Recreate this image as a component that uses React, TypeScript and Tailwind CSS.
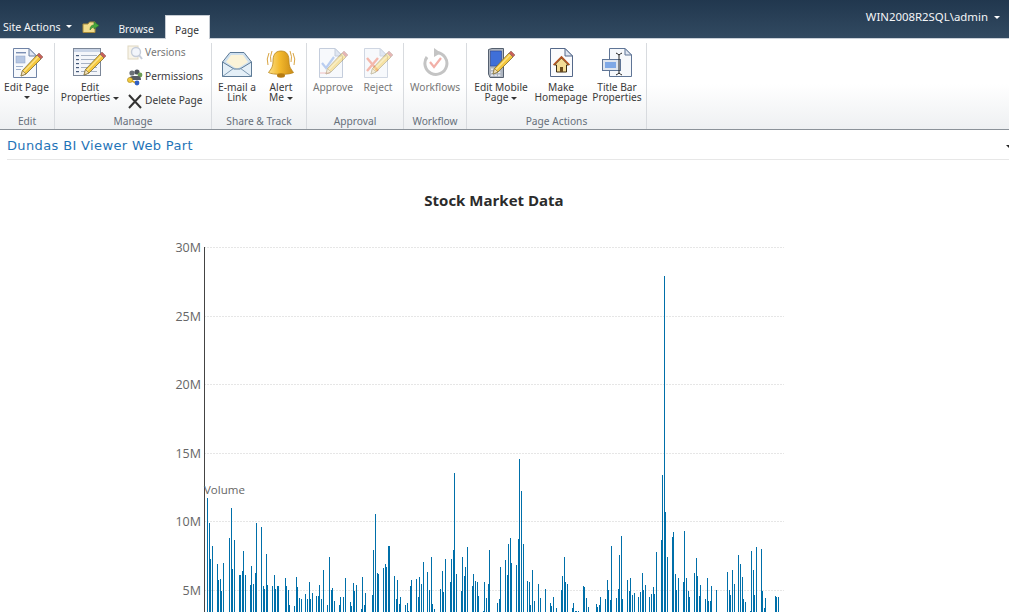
import React from "react";

const A: [number, number][] = [[141,175],[147,249],[150,357],[156,318],[171,372],[174,420],[180,417],[183,453],[189,369],[207,294],[213,204],[216,387],[222,300],[237,405],[240,405],[246,393],[249,333],[255,405],[270,435],[273,378],[279,432],[285,399],[288,249],[303,261],[309,438],[312,447],[318,342],[321,435],[336,438],[342,405],[345,447],[351,438],[354,438],[375,414],[378,438],[384,450],[387,495],[402,498],[408,411],[411,441],[417,474],[423,477],[435,462],[441,477],[447,426],[450,477],[456,459],[468,468],[474,468],[477,435],[483,477],[489,390],[501,495],[507,351],[513,450],[516,444],[522,483],[537,495],[540,471],[549,471],[555,414],[570,486],[573,498],[579,429],[582,453],[588,435],[603,507],[606,411],[612,495],[615,459],[636,465],[639,330],[645,222],[651,399],[654,402],[669,384],[675,372],[678,381],[684,318],[687,318],[702,408],[708,477],[711,420],[717,492],[720,471],[735,495],[741,489],[744,513],[750,438],[753,420],[768,417],[774,471],[777,411],[783,432],[789,366],[801,396],[807,450],[813,351],[816,492],[822,507],[840,447],[846,393],[849,456],[855,357],[870,426],[873,357],[879,330],[882,99],[888,402],[903,453],[906,351],[912,408],[915,381],[921,321]];
const B: [number, number][] = [[6,438],[9,402],[15,423],[21,426],[24,468],[39,513],[42,426],[48,474],[54,432],[57,330],[81,489],[87,477],[90,381],[105,360],[111,405],[114,312],[120,294],[123,369],[138,375],[144,297],[147,57],[153,153],[159,312],[171,423],[177,426],[180,495],[186,390],[192,483],[204,432],[210,474],[225,447],[240,489],[243,498],[249,471],[258,504],[273,450],[276,408],[282,351],[285,426],[291,432],[306,504],[309,489],[315,513],[318,513],[324,513],[339,438],[342,441],[348,474],[354,501],[378,492],[381,501],[387,495],[390,471],[405,477],[411,420],[414,450],[420,480],[423,318],[438,474],[444,447],[447,345],[453,288],[456,477],[471,420],[477,453],[480,414],[486,465],[492,459],[504,471],[510,456],[516,399],[519,450],[525,435],[537,471],[543,462],[549,441],[552,462],[558,336],[573,300],[576,105],[582,-492],[585,216],[591,351],[606,291],[609,276],[615,402],[618,450],[624,414],[639,426],[642,273],[648,414],[654,453],[657,471],[672,399],[678,354],[681,408],[687,468],[690,435],[705,477],[711,414],[714,483],[720,483],[723,438],[738,450],[771,396],[777,450],[780,465],[786,390],[792,432],[804,345],[810,372],[816,411],[819,477],[825,486],[840,513],[843,333],[849,390],[852,465],[858,321],[873,327],[876,453],[882,504],[885,474],[915,468],[918,471],[924,471]];

const bars = [
  ...A.map(([x, y]) => ({ x: 160 + x / 3, y: 440 + y / 3 })),
  ...B.map(([x, y]) => ({ x: 470 + x / 3, y: 440 + y / 3 })),
];

const ticks = [
  ["30M", 247],
  ["25M", 316],
  ["20M", 384],
  ["15M", 453],
  ["10M", 521],
  ["5M", 590],
] as const;

const Caret = ({ className = "border-t-[#444]" }: { className?: string }) => (
  <span className={`inline-block w-0 h-0 border-l-[3px] border-r-[3px] border-t-[3px] border-l-transparent border-r-transparent align-middle ${className}`} />
);

const Pencil = ({ o = 1, dx = 0, dy = 0 }: { o?: number; dx?: number; dy?: number }) => (
  <g opacity={o} transform={`translate(${dx} ${dy})`}>
    <path d="M10 28 L11.5 22.5 L26 7 L30 11 L15 26 Z" fill="#f5c73d" stroke="#7a6a35" strokeWidth="0.8" />
    <path d="M13 23.5 L27.5 8.5" stroke="#fbe48a" strokeWidth="1.4" />
    <path d="M10 28 L11.5 22.5 L15 26 Z" fill="#f3dfb5" stroke="#7a6a35" strokeWidth="0.6" />
    <path d="M26 7 L28 5 L32 9 L30 11 Z" fill="#c9605a" stroke="#8b6a60" strokeWidth="0.6" />
  </g>
);

const Doc = ({ children, stroke = "#6f83a6", o = 1 }: { children?: React.ReactNode; stroke?: string; o?: number }) => (
  <g opacity={o}>
    <path d="M3.5 1.5 H19 L26.5 9 V30.5 H3.5 Z" fill="#f7f9fc" stroke={stroke} />
    <path d="M19 1.5 V9 H26.5 Z" fill="#dfe6f2" stroke={stroke} />
    {children}
  </g>
);

const I = ({ children, w = 34, h = 32 }: { children: React.ReactNode; w?: number; h?: number }) => (
  <svg width={w} height={h} viewBox={`0 0 ${w} ${h}`} className="block mx-auto">
    {children}
  </svg>
);

const EditPageIcon = () => (
  <I>
    <Doc>
      <rect x="6" y="5" width="10" height="1.4" fill="#7b8fb3" />
      <rect x="6" y="9" width="9" height="7" fill="#b5c6e2" stroke="#8ea3c6" strokeWidth="0.5" />
      <rect x="6" y="19" width="7" height="1" fill="#9fb0cc" />
      <rect x="6" y="22" width="5" height="1" fill="#9fb0cc" />
    </Doc>
    <Pencil dx={1} dy={1} />
  </I>
);

const EditPropsIcon = () => (
  <I w={36} h={32}>
    <rect x="1.5" y="1.5" width="27" height="27" fill="#f4f6fa" stroke="#7c8798" />
    <rect x="2" y="2" width="26" height="3" fill="#c9d4e6" />
    {[9, 13, 17, 21, 25].map((y) => (
      <g key={y}>
        <rect x="4" y={y - 1} width="3" height="1.2" fill="#465a7a" />
        <rect x="9" y={y - 1} width="16" height="1" fill="#a7b2c4" />
      </g>
    ))}
    <Pencil dx={2} dy={0} />
  </I>
);

const EnvelopeIcon = () => (
  <I w={32} h={30}>
    <path d="M1.5 13 L9 3.5 H23 L30.5 13 V27.5 H1.5 Z" fill="#cfe0ee" stroke="#5d7a96" />
    <path d="M5 13 L10 6 H22 L27 13 L16 20 Z" fill="#fbf3d8" />
    <path d="M1.5 13 L13 20 H19 L30.5 13 V27.5 H1.5 Z" fill="#e4eff7" stroke="#5d7a96" />
    <path d="M1.5 27.5 L13 19 M30.5 27.5 L19 19" stroke="#7e9ab3" fill="none" />
  </I>
);

const BellIcon = () => (
  <I w={30} h={30}>
    <defs>
      <linearGradient id="bell" x1="0" x2="1" y1="0" y2="0">
        <stop offset="0" stopColor="#fbe08a" />
        <stop offset="0.45" stopColor="#f3b92c" />
        <stop offset="1" stopColor="#c98a17" />
      </linearGradient>
    </defs>
    <path d="M3 4 Q0 10 2 16 M27 4 Q30 10 28 16 M6 2 Q3.5 8 5 13 M24 2 Q26.5 8 25 13" stroke="#d9a441" strokeWidth="1" fill="none" />
    <path d="M15 2 C8.5 2 7 7 7 12 C7 18 5 20 2.5 23.5 C6 26 24 26 27.5 23.5 C25 20 23 18 23 12 C23 7 21.5 2 15 2 Z" fill="url(#bell)" stroke="#b9851a" strokeWidth="0.8" />
    <ellipse cx="15" cy="26.5" rx="4" ry="2.2" fill="#b67b12" />
  </I>
);

const ApproveIcon = () => (
  <I>
    <Doc stroke="#c4cddc">
      <path d="M6 16 L10 21 L18 10" stroke="#b9cdf0" strokeWidth="2.2" fill="none" />
      <path d="M4 26 H14" stroke="#f0c0c0" />
    </Doc>
    <Pencil dx={0} dy={-1} o={0.45} />
  </I>
);

const RejectIcon = () => (
  <I>
    <Doc stroke="#cfd6e2">
      <path d="M6 11 L17 24 M17 11 L6 24" stroke="#f4b8ac" strokeWidth="2.4" fill="none" />
    </Doc>
    <Pencil dx={0} dy={-1} o={0.45} />
  </I>
);

const WorkflowIcon = () => (
  <I w={28} h={32}>
    <path d="M6 10 A11 11 0 1 0 16 5.5" fill="none" stroke="#c4c4c4" strokeWidth="3" />
    <path d="M13 1 L20 6 L13 10 Z" fill="#c4c4c4" />
    <path d="M9 15 L13 20 L20 11" fill="none" stroke="#f2b0a8" strokeWidth="2.2" />
  </I>
);

const MobileIcon = () => (
  <I w={30}>
    <path d="M2.5 2.5 L6 1.5 H17.5 V30.5 H4 L2.5 27 Z" fill="#aeb5c0" stroke="#55606f" />
    <rect x="4.5" y="4" width="11" height="15" fill="#3f6fd8" stroke="#27418f" strokeWidth="0.6" />
    {[21.5, 24.5, 27.5].map((y) =>
      [5, 8.5, 12].map((x) => <rect key={`${x}${y}`} x={x} y={y} width="2.4" height="1.6" fill="#e6e9ee" />)
    )}
    <Pencil dx={-3} dy={-1} />
  </I>
);

const HomepageIcon = () => (
  <I w={30} h={32}>
    <path d="M4.5 1.5 H19 L26.5 9 V29.5 H4.5 Z" fill="#fafbfd" stroke="#55698a" />
    <path d="M19 1.5 V9 H26.5 Z" fill="#dfe6f2" stroke="#55698a" />
    <path d="M8.5 18 L15.5 11 L22.5 18 H20.5 V25 H10.5 V18 Z" fill="#f4dc96" stroke="#3c2c12" />
    <path d="M7.5 18 L15.5 10 L23.5 18" fill="none" stroke="#b3521f" strokeWidth="1.6" />
    <rect x="14" y="20" width="3" height="5" fill="#6a4a1e" />
  </I>
);

const TitleBarIcon = () => (
  <I w={32} h={32}>
    <path d="M8.5 1.5 H24 L30.5 8 V29.5 H8.5 Z" fill="#f6f8fb" stroke="#5f7596" />
    <path d="M24 1.5 V8 H30.5 Z" fill="#dfe6f2" stroke="#5f7596" />
    <rect x="1.5" y="12.5" width="18" height="11" fill="#dfe5ee" stroke="#5f7596" />
    <rect x="4" y="15" width="11" height="6" fill="#7fa8e6" />
    <path d="M15 6 Q17 7 18 8 Q19 7 21 6 M15 28 Q17 27 18 26 Q19 27 21 28 M18 8 V26" stroke="#222" fill="none" />
  </I>
);

const Big = ({ w, icon, lines, caret, muted }: { w: string; icon: React.ReactNode; lines: string[]; caret?: "line" | "inline"; muted?: boolean }) => (
  <div className={`${w} shrink-0 flex flex-col items-center text-center leading-[10px] ${muted ? "text-[#777]" : "text-[#3a3a3a]"}`}>
    <div className="h-[36px] flex items-end mb-[3px]">{icon}</div>
    {lines.map((l, i) => (
      <div key={l} className="h-[10px] whitespace-nowrap">
        {l}
        {caret === "inline" && i === lines.length - 1 && <Caret className="ml-[3px] border-t-[#333]" />}
      </div>
    ))}
    {caret === "line" && (
      <div className="h-[10px] flex items-center justify-center">
        <Caret className="border-t-[#333]" />
      </div>
    )}
  </div>
);

const Group = ({ w, label, children }: { w: string; label: string; children: React.ReactNode }) => (
  <div className={`${w} shrink-0 h-[86px] flex flex-col border-r border-[#d8dbdf]`}>
    <div className="flex flex-1 items-start">{children}</div>
    <div className="h-[14px] mb-[1px] text-center text-[#666f7a] leading-[14px]">{label}</div>
  </div>
);

const Small = ({ icon, label, muted }: { icon: React.ReactNode; label: string; muted?: boolean }) => (
  <div className={`h-[24px] flex items-center gap-[1px] whitespace-nowrap ${muted ? "text-[#777]" : "text-[#3a3a3a]"}`}>
    <svg width="18" height="18" viewBox="0 0 18 18" className="shrink-0">
      {icon}
    </svg>
    {label}
  </div>
);

export default function App() {
  return (
    <div className="w-[1009px] h-[612px] overflow-hidden bg-white text-[10.2px]" style={{ fontFamily: '"Noto Sans", "DejaVu Sans", sans-serif' }}>
      {/* Top bar */}
      <div className="h-[39px] bg-gradient-to-b from-[#21374e] to-[#324a61] border-b border-[#c9d0d8] flex items-end justify-between">
        <div className="flex items-end h-full">
          <div className="ml-[3px] mb-[4px] text-[#f4f6f8] text-[10.6px] leading-[14px] whitespace-nowrap">
            Site Actions
            <Caret className="ml-[5px] mb-[3px] border-t-white" />
          </div>
          <svg width="18" height="16" viewBox="0 0 18 16" className="ml-[10px] mb-[3px]">
            <path d="M1 5 H6 L7.5 3 H13 V13.5 H1 Z" fill="#f1dc8c" stroke="#a88c3c" />
            <path d="M8 11 Q8 6 12 6 V3 L17 6.5 L12 10 V8 Q10 8 8 11 Z" fill="#48a83f" stroke="#2f7a2a" strokeWidth="0.6" />
          </svg>
          <div className="w-[47px] ml-[13px] mb-[2px] text-center text-[#f3f5f7] leading-[14px]">Browse</div>
          <div className="w-[45px] ml-[5px] h-[24px] mb-[-1px] bg-white border border-b-0 border-[#c6ccd3] text-center text-[#333] leading-[28px]">Page</div>
        </div>
        <div className="mr-[9px] self-start mt-[10px] text-[#f4f6f8] text-[11.4px] leading-[14px] whitespace-nowrap">
          WIN2008R2SQL\admin
          <Caret className="ml-[6px] border-t-white" />
        </div>
      </div>

      {/* Ribbon */}
      <div className="h-[91px] bg-gradient-to-b from-white from-50% to-[#eef0f2] border-b border-[#8b9299] flex items-end">
        <Group w="w-[55px]" label="Edit">
          <Big w="w-[53px]" icon={<EditPageIcon />} lines={["Edit Page"]} caret="line" />
        </Group>
        <Group w="w-[157px]" label="Manage">
          <div className="w-[5px]" />
          <Big w="w-[60px]" icon={<EditPropsIcon />} lines={["Edit", "Properties"]} caret="inline" />
          <div className="ml-[6px] flex flex-col mt-[-2px]">
            <Small
              muted
              label="Versions"
              icon={
                <g opacity="0.55">
                  <rect x="2" y="2" width="10" height="13" fill="#f3ecd8" stroke="#c7b88f" />
                  <circle cx="10" cy="8" r="4.5" fill="#e8eef8" stroke="#98a6bd" strokeWidth="1.4" />
                  <path d="M13 11 L16 15" stroke="#98a6bd" strokeWidth="2" />
                </g>
              }
            />
            <Small
              label="Permissions"
              icon={
                <g>
                  <circle cx="6" cy="5" r="2.6" fill="#6b7078" />
                  <circle cx="11" cy="4" r="2.6" fill="#4e535b" />
                  <circle cx="14" cy="7" r="2.4" fill="#6e9c54" />
                  <path d="M3 12 Q3 8 7 8 H12 Q15 8 15 12 Z" fill="#565b63" />
                  <circle cx="4" cy="12" r="2.6" fill="#f0c83c" stroke="#9a7a1a" strokeWidth="0.5" />
                  <path d="M6 13 L10 15" stroke="#d8a820" strokeWidth="1.6" />
                  <circle cx="11" cy="15" r="2.4" fill="#2f5fc4" />
                </g>
              }
            />
            <Small label="Delete Page" icon={<path d="M3 3 L15 16 M15 3 L3 16" stroke="#333" strokeWidth="2" />} />
          </div>
        </Group>
        <Group w="w-[95px]" label="Share & Track">
          <Big w="w-[50px]" icon={<EnvelopeIcon />} lines={["E-mail a", "Link"]} />
          <Big w="w-[38px]" icon={<BellIcon />} lines={["Alert", "Me"]} caret="inline" />
        </Group>
        <Group w="w-[97px]" label="Approval">
          <Big w="w-[52px]" muted icon={<ApproveIcon />} lines={["Approve"]} />
          <Big w="w-[38px]" muted icon={<RejectIcon />} lines={["Reject"]} />
        </Group>
        <Group w="w-[63px]" label="Workflow">
          <Big w="w-[62px]" muted icon={<WorkflowIcon />} lines={["Workflows"]} />
        </Group>
        <Group w="w-[180px]" label="Page Actions">
          <Big w="w-[68px]" icon={<MobileIcon />} lines={["Edit Mobile", "Page"]} caret="inline" />
          <Big w="w-[52px]" icon={<HomepageIcon />} lines={["Make", "Homepage"]} />
          <Big w="w-[60px]" icon={<TitleBarIcon />} lines={["Title Bar", "Properties"]} />
        </Group>
      </div>

      {/* Web part title */}
      <div className="ml-[7px] h-[30px] pt-[3px] border-b border-[#e7e7e7] flex items-center justify-between">
        <span className="text-[13px] tracking-[0.36px] text-[#1f74b8] whitespace-nowrap" style={{ fontFamily: '"DejaVu Sans", sans-serif' }}>
          Dundas BI Viewer Web Part
        </span>
        <Caret className="mr-[-3px] border-t-[#222]" />
      </div>

      {/* Chart */}
      <div className="h-[80px] w-[988px] flex items-center justify-center text-[15px] font-bold text-[#2b2b2b]" style={{ fontFamily: '"Open Sans", sans-serif' }}>
        Stock Market Data
      </div>
      <svg width="1009" height="372" viewBox="0 240 1009 372" className="block" style={{ fontFamily: '"Open Sans", sans-serif' }}>
        {ticks.map(([label, y]) => (
          <g key={label}>
            <line x1="204" x2="784" y1={y + 0.5} y2={y + 0.5} stroke="#e6e6e6" strokeDasharray="2 1" />
            <text x="201" y={y + 5} textAnchor="end" fontSize="12.5" fill="#666">
              {label}
            </text>
          </g>
        ))}
        <line x1="204.5" x2="204.5" y1="247" y2="612" stroke="#444" />
        {bars.map((b, i) => (
          <rect key={i} x={Math.round(b.x)} y={Math.round(b.y)} width="1" height={612 - Math.round(b.y)} fill="#006fa9" shapeRendering="crispEdges" />
        ))}
        <text x="204" y="494" fontSize="11.5" fill="#666">
          Volume
        </text>
      </svg>
    </div>
  );
}
